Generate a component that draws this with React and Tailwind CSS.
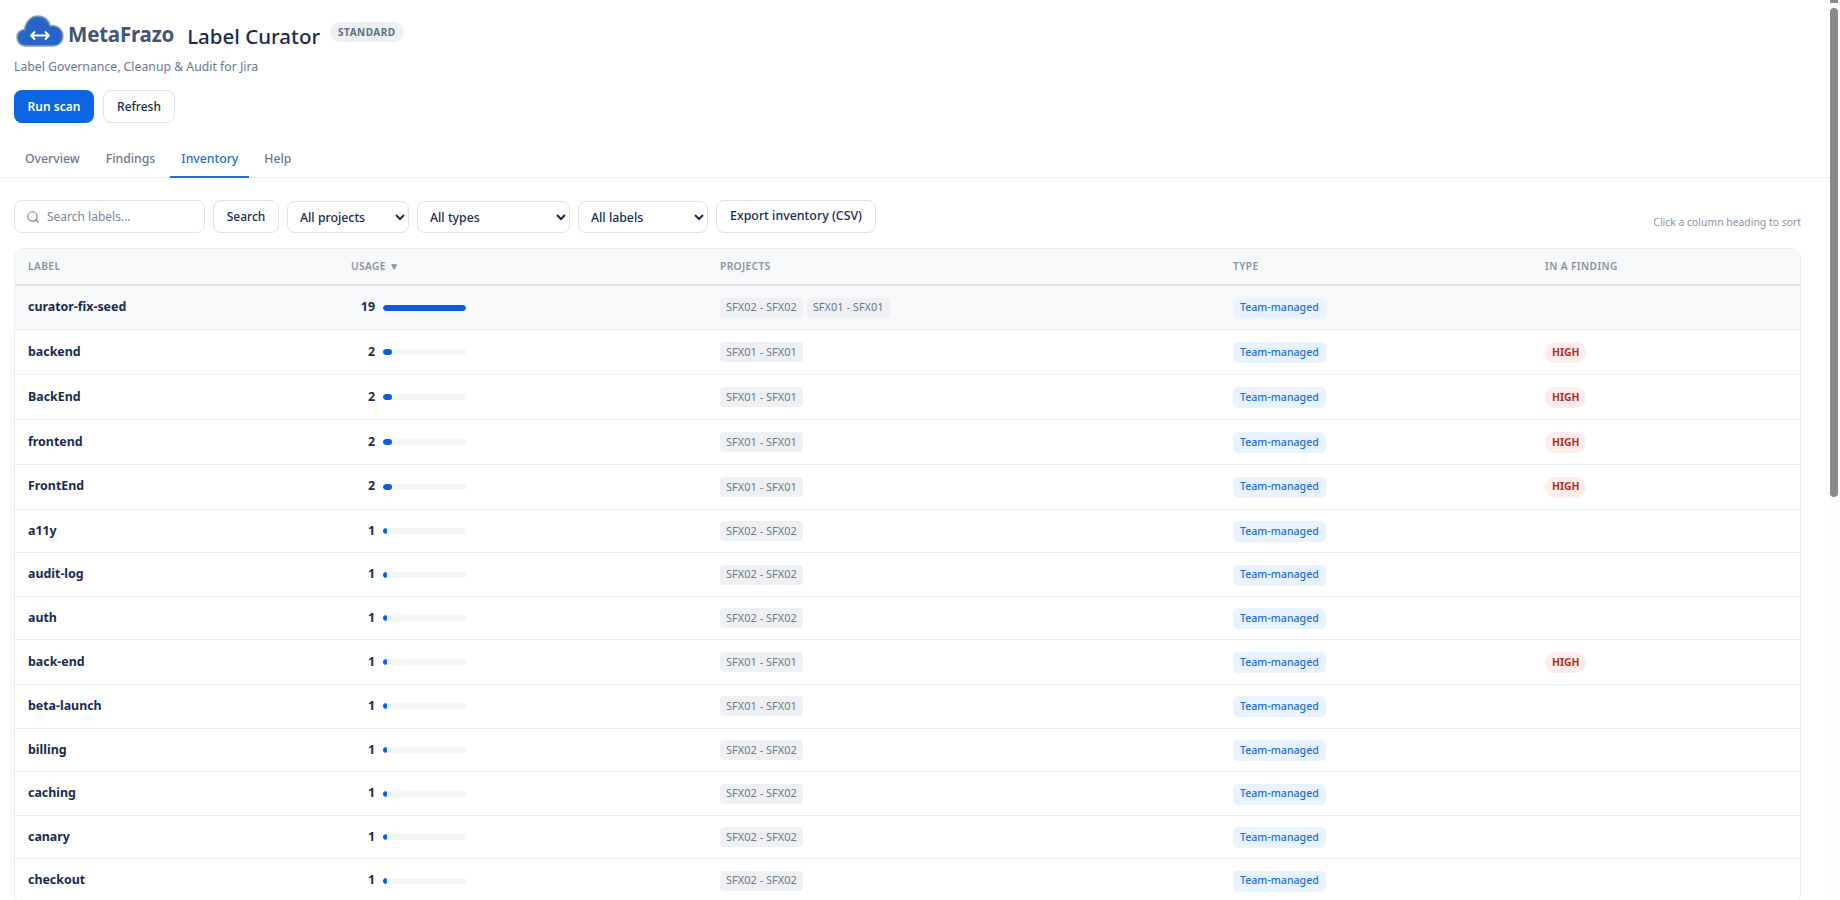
const F = { fontFamily: '"Noto Sans", sans-serif' };

const rows = [
  ["curator-fix-seed", 19, ["SFX02 - SFX02", "SFX01 - SFX01"], false],
  ["backend", 2, ["SFX01 - SFX01"], true],
  ["BackEnd", 2, ["SFX01 - SFX01"], true],
  ["frontend", 2, ["SFX01 - SFX01"], true],
  ["FrontEnd", 2, ["SFX01 - SFX01"], true],
  ["a11y", 1, ["SFX02 - SFX02"], false],
  ["audit-log", 1, ["SFX02 - SFX02"], false],
  ["auth", 1, ["SFX02 - SFX02"], false],
  ["back-end", 1, ["SFX01 - SFX01"], true],
  ["beta-launch", 1, ["SFX01 - SFX01"], false],
  ["billing", 1, ["SFX02 - SFX02"], false],
  ["caching", 1, ["SFX02 - SFX02"], false],
  ["canary", 1, ["SFX02 - SFX02"], false],
  ["checkout", 1, ["SFX02 - SFX02"], false],
];

function Logo() {
  return (
    <svg width="48" height="34" viewBox="0 0 48 34" className="shrink-0">
      <path
        d="M10 32 C4 32 1 28 1 23.5 C1 19 4 16 8.5 15.5 C9.5 8 14.5 2 22 2 C28.5 2 33 6.5 34.5 12 C36 11.5 37 11.5 38 11.8 C43.5 12.5 47 17 47 22 C47 28 42.5 32 37 32 Z"
        fill="#2566c8"
        stroke="#8aa0bd"
        strokeWidth="1.5"
      />
      <path d="M15 21.5 H33 M18.5 18 L15 21.5 L18.5 25 M29.5 18 L33 21.5 L29.5 25" fill="none" stroke="#fff" strokeWidth="1.8" strokeLinecap="round" strokeLinejoin="round" />
    </svg>
  );
}

function SearchIcon() {
  return (
    <svg width="14" height="14" viewBox="0 0 24 24" fill="none" stroke="#7a869a" strokeWidth="2" strokeLinecap="round" className="shrink-0">
      <circle cx="11" cy="11" r="8" />
      <path d="m21 21-4.3-4.3" />
    </svg>
  );
}

function Select({ label, w }) {
  return (
    <select
      style={F}
      className={`${w} h-[32px] self-end rounded-lg border border-[#dfe1e6] bg-white pl-[8px] pr-1 text-[12.3px] font-medium text-[#172b4d] outline-none`}
    >
      <option>{label}</option>
    </select>
  );
}

function Row({ row, first }) {
  const [name, usage, projects, high] = row;
  const pct = usage === 19 ? "100%" : usage === 2 ? "10.5%" : "5.3%";
  const tall = first || high;
  return (
    <tr className={`border-b border-[#ebecf0] ${tall ? "h-[44.85px]" : "h-[43.55px]"} ${first ? "bg-[#f7f8f9]" : ""}`}>
      <td className="py-0 pl-[13px] pr-[14px] align-middle text-[12.4px] font-bold text-[#172b4d]">{name}</td>
      <td className="py-0 pl-[13px] pr-[14px] align-middle">
        <div className="flex items-center gap-[8px]">
          <span className="w-[24px] text-right text-[12.4px] font-bold text-[#172b4d]">{usage}</span>
          <div className="h-[6px] w-[83px] overflow-hidden rounded-full bg-[#f4f5f7]">
            <div className="h-full rounded-full bg-[#0c5fd8]" style={{ width: pct }} />
          </div>
        </div>
      </td>
      <td className="py-0 pl-[13px] pr-[14px] align-middle">
        <div className="flex gap-[4px]">
          {projects.map((p) => (
            <span key={p} className="flex h-[20px] items-center rounded-[4px] bg-[#eef0f4] px-[6px] text-[11px] text-[#6b778c]">{p}</span>
          ))}
        </div>
      </td>
      <td className="py-0 pl-[13px] pr-[14px] align-middle">
        <div className="flex pt-[1px]">
          <span className="flex h-[21px] items-center rounded-[5px] bg-[#e9f2ff] px-[7px] text-[10.6px] font-medium text-[#1a6fe0]">Team-managed</span>
        </div>
      </td>
      <td className="py-0 pl-[13px] pr-[14px] align-middle">
        {high && (
          <div className="flex pt-[1px]">
            <span className="flex h-[21px] items-center rounded-full bg-[#ffeceb] px-[7px] text-[10.4px] font-bold text-[#ae2e24]">HIGH</span>
          </div>
        )}
      </td>
    </tr>
  );
}

export default function App() {
  return (
    <div style={F} className="relative h-[900px] overflow-hidden bg-white text-[#172b4d]">
      <div className="mr-[10px]">
        <header className="pl-[14px] pr-[29px] pt-[14px]">
          <div className="flex items-start">
            <div className="ml-[2px]"><Logo /></div>
            <span className="ml-[4px] mt-[5px] text-[20.5px] font-bold leading-[30px] tracking-[-0.2px] text-[#3f5675]">MetaFrazo</span>
            <h1 className="ml-[13px] mt-[7px] text-[20.5px] font-medium leading-[30px] text-[#172b4d]">Label Curator</h1>
            <span className="ml-[10px] mt-[8px] flex h-[20px] items-center rounded-full bg-[#eef0f4] px-[8px] text-[10px] font-bold tracking-[0.5px] text-[#5e6c84]">STANDARD</span>
          </div>
          <p className="mt-[7px] text-[12.25px] leading-[18px] text-[#6b778c]">Label Governance, Cleanup &amp; Audit for Jira</p>
          <div className="mt-[14px] flex gap-[9px]">
            <button className="h-[33px] w-[80px] rounded-lg bg-[#0c66e4] text-[12px] font-semibold text-white">Run scan</button>
            <button className="h-[33px] w-[72px] rounded-lg border border-[#dfe1e6] bg-white text-[12px] font-medium text-[#172b4d]">Refresh</button>
          </div>
        </header>
        <nav className="mt-[22px] flex gap-[4px] border-b border-[#ebecf0] px-[14px]">
          {["Overview", "Findings", "Inventory", "Help"].map((t) => (
            <div
              key={t}
              className={`-mb-px px-[11px] pb-[7px] pt-[4px] text-[12.25px] font-medium leading-[20px] ${t === "Inventory" ? "border-b-2 border-[#1a6fe0] text-[#1a6fe0]" : "border-b-2 border-transparent text-[#6b778c]"}`}
            >
              {t}
            </div>
          ))}
        </nav>
        <main className="pl-[14px] pr-[29px] pt-[22px]">
          <div className="flex items-end">
            <div className="flex items-center gap-[8px]">
              <div className="flex h-[33px] w-[191px] items-center gap-[7px] rounded-lg border border-[#dfe1e6] bg-white px-[11px]">
                <SearchIcon />
                <span className="text-[12px] text-[#7a869a]">Search labels...</span>
              </div>
              <button className="h-[33px] w-[66px] rounded-lg border border-[#dfe1e6] bg-white text-[12px] font-medium text-[#172b4d]">Search</button>
              <Select label="All projects" w="w-[122px]" />
              <Select label="All types" w="w-[153px]" />
              <Select label="All labels" w="w-[130px]" />
              <button className="h-[33px] w-[160px] rounded-lg border border-[#dfe1e6] bg-white text-[12.4px] font-medium text-[#172b4d]">Export inventory (CSV)</button>
            </div>
            <span className="ml-auto pb-[2px] text-[10.4px] text-[#8993a4]">Click a column heading to sort</span>
          </div>
          <div className="mt-[15px] overflow-hidden rounded-[10px] border border-[#ebecf0]">
            <table className="w-full table-fixed border-collapse">
              <colgroup>
                <col className="w-[323px]" />
                <col className="w-[369px]" />
                <col className="w-[513px]" />
                <col className="w-[312px]" />
                <col />
              </colgroup>
              <thead>
                <tr className="h-[36px] border-b-2 border-[#dfe1e6] bg-[#f7f8f9] text-left text-[10.2px] font-semibold tracking-[0.4px] text-[#8993a4]">
                  <th className="pl-[13px] pr-[14px] font-semibold">LABEL</th>
                  <th className="pl-[13px] pr-[14px] font-semibold">USAGE ▼</th>
                  <th className="pl-[13px] pr-[14px] font-semibold">PROJECTS</th>
                  <th className="pl-[13px] pr-[14px] font-semibold">TYPE</th>
                  <th className="pl-[13px] pr-[14px] font-semibold">IN A FINDING</th>
                </tr>
              </thead>
              <tbody>
                {rows.map((r, i) => (
                  <Row key={i} row={r} first={i === 0} />
                ))}
              </tbody>
            </table>
          </div>
        </main>
      </div>
      <div className="absolute right-0 top-0 h-full w-[10px] bg-[#fdfdfd]">
        <div className="absolute right-[2px] top-0 h-[3px] w-[8px] bg-[#8a8a8a]" />
        <div className="absolute right-[2px] top-[8px] h-[489px] w-[8px] rounded-full bg-[#8a8a8a]" />
      </div>
    </div>
  );
}
